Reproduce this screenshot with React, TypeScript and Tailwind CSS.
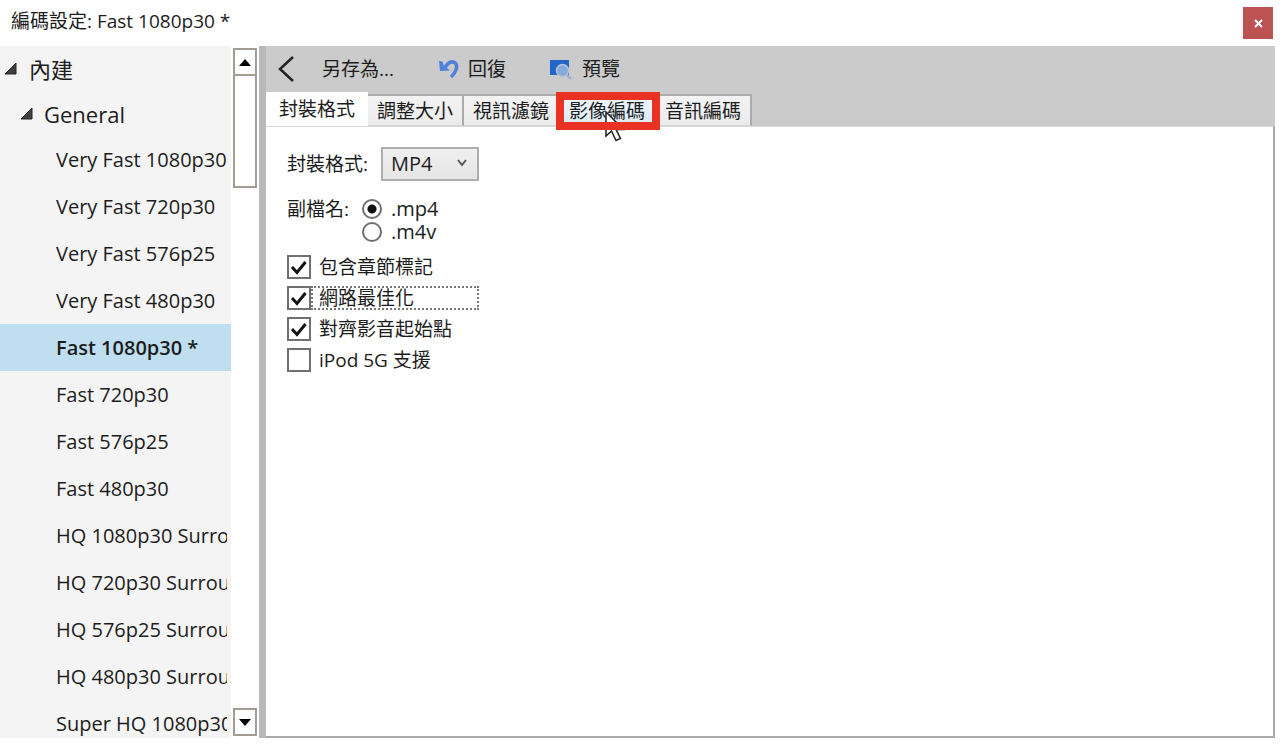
import React, { useState } from 'react';

const PRESETS = [
  'Very Fast 1080p30',
  'Very Fast 720p30',
  'Very Fast 576p25',
  'Very Fast 480p30',
  'Fast 1080p30',
  'Fast 720p30',
  'Fast 576p25',
  'Fast 480p30',
  'HQ 1080p30 Surround',
  'HQ 720p30 Surround',
  'HQ 576p25 Surround',
  'HQ 480p30 Surround',
  'Super HQ 1080p30 Surround',
];

const TABS = [
  { id: 'container', label: '封裝格式' },
  { id: 'dimensions', label: '調整大小' },
  { id: 'filters', label: '視訊濾鏡' },
  { id: 'video', label: '影像編碼' },
  { id: 'audio', label: '音訊編碼' },
];

const TAB_STYLES = {
  active: 'h-[34px] bg-white px-[13px]',
  hover: 'h-8 border-t-2 border-r-2 border-b border-[#ababab] bg-linear-to-b from-[#eef5fc] to-[#dcebf9] px-[9px]',
  idle: 'h-8 border-t-2 border-r-2 border-b border-[#ababab] border-b-[#d4d4d4] bg-linear-to-b from-[#f3f3f3] to-[#ebebeb] px-[9px]',
};

const OPTIONS = [
  { id: 'chapters', label: '包含章節標記' },
  { id: 'optimize', label: '網路最佳化' },
  { id: 'align', label: '對齊影音起始點' },
  { id: 'ipod', label: 'iPod 5G 支援' },
];

function Expander() {
  return (
    <svg width="13" height="13" viewBox="0 0 13 13" className="shrink-0">
      <path d="M12 1V12H1Z" fill="#404040" stroke="#262626" />
    </svg>
  );
}

function UndoIcon() {
  return (
    <svg width="22" height="22" viewBox="0 0 22 22" fill="none">
      <path d="M7 9.5C10 4.5 13.5 3 16.5 4.5C20.5 7 18.5 14 13 19" stroke="#4f80dc" strokeWidth="3.5" />
      <path d="M1 3L2 13L12 12.5L8.5 9.5L6 8.5L4.5 3.5Z" fill="#4f80dc" />
    </svg>
  );
}

function PreviewIcon() {
  return (
    <svg width="22" height="22" viewBox="0 0 22 22" fill="none">
      <rect x="0" y="2" width="19" height="15" fill="#2465c9" />
      <path d="M16 16L21 21" stroke="#9fb0c6" strokeWidth="2.5" />
      <circle cx="12.5" cy="12.5" r="6" fill="#86a9d8" stroke="#b3c3d8" strokeWidth="1.5" />
    </svg>
  );
}

function Sidebar() {
  const [selected, setSelected] = useState('Fast 1080p30');

  return (
    <aside className="flex w-[259px] shrink-0 overflow-hidden">
      <div className="min-w-0 flex-1 bg-[#f4f4f4]">
        <button className="flex h-[45px] w-full items-center gap-3 pl-1 text-[22px]">
          <Expander />
          內建
        </button>
        <button className="flex h-[45px] w-full items-center gap-[11px] pl-5 text-[22px]">
          <Expander />
          General
        </button>
        <ul className="text-[20px] leading-7">
          {PRESETS.map(preset => (
            <li key={preset} className={selected === preset ? 'bg-[#bfdff1]' : ''}>
              <button
                onClick={() => setSelected(preset)}
                className={`flex h-[47px] w-full items-center pr-1 pl-14 text-left ${selected === preset ? 'font-semibold' : ''}`}
              >
                <span className="overflow-hidden whitespace-nowrap">
                  {selected === preset ? `${preset} *` : preset}
                </span>
              </button>
            </li>
          ))}
        </ul>
      </div>

      {/* Scroll bar */}
      <div className="flex w-7 shrink-0 flex-col items-center bg-white py-0.5">
        <button aria-label="Scroll up" className="flex h-7 w-6 shrink-0 items-center justify-center border-2 border-[#a39c92]">
          <svg width="12" height="7" viewBox="0 0 12 7">
            <path d="M6 0L12 7H0Z" fill="#000" />
          </svg>
        </button>
        <div className="h-28 w-6 shrink-0 border-2 border-t-0 border-[#a39c92]" />
        <button aria-label="Scroll down" className="mt-auto flex h-7 w-6 shrink-0 items-center justify-center border-2 border-[#a39c92]">
          <svg width="12" height="7" viewBox="0 0 12 7">
            <path d="M0 0H12L6 7Z" fill="#000" />
          </svg>
        </button>
      </div>
    </aside>
  );
}

function ContainerPanel() {
  const [format, setFormat] = useState('MP4');
  const [extension, setExtension] = useState('.mp4');
  const [checked, setChecked] = useState(['chapters', 'optimize', 'align']);

  const toggle = (id: string) =>
    setChecked(checked.includes(id) ? checked.filter(c => c !== id) : [...checked, id]);

  return (
    <div className="flex flex-col items-start px-[21px] pt-5">
      <div className="flex items-center gap-[13px]">
        <label htmlFor="format">封裝格式:</label>
        <div className="relative">
          <select
            id="format"
            value={format}
            onChange={e => setFormat(e.target.value)}
            className="h-[34px] w-[98px] appearance-none border-2 border-[#adadad] bg-linear-to-b from-[#f0f0f0] to-[#e5e5e5] pl-2 text-[20px] outline-none"
          >
            <option>MP4</option>
            <option>MKV</option>
          </select>
          <svg width="10" height="8" viewBox="0 0 10 8" fill="none" className="pointer-events-none absolute top-3 right-3">
            <path d="M1 1L5 6L9 1" stroke="#555" strokeWidth="2" />
          </svg>
        </div>
      </div>

      <fieldset className="mt-4 flex gap-[13px]">
        <legend className="float-left">副檔名:</legend>
        <div>
          {['.mp4', '.m4v'].map(ext => (
            <label key={ext} className="flex h-[23px] items-center gap-[9px] text-[20px] leading-[22px]">
              <input
                type="radio"
                name="extension"
                checked={extension === ext}
                onChange={() => setExtension(ext)}
                className="size-5 appearance-none rounded-full border-2 border-[#707070] bg-white checked:bg-[radial-gradient(circle,#111_4px,transparent_5px)]"
              />
              {ext}
            </label>
          ))}
        </div>
      </fieldset>

      <div className="mt-2 flex flex-col">
        {OPTIONS.map(option => (
          <div key={option.id} className="flex h-[31px] items-center">
            <div className="relative flex">
              <input
                id={option.id}
                type="checkbox"
                checked={checked.includes(option.id)}
                onChange={() => toggle(option.id)}
                className="peer size-6 appearance-none border-2 border-[#707070] bg-white"
              />
              <svg
                width="24"
                height="24"
                viewBox="0 0 24 24"
                fill="none"
                className="pointer-events-none absolute inset-0 hidden peer-checked:block"
              >
                <path d="M5 12L10 17.5L18.5 7" stroke="#111" strokeWidth="3" />
              </svg>
            </div>
            <label
              htmlFor={option.id}
              className={`flex h-6 w-42 items-center border-2 border-dotted pl-1.5 ${option.id === 'optimize' ? 'border-[#777]' : 'border-transparent'}`}
            >
              {option.label}
            </label>
          </div>
        ))}
      </div>
    </div>
  );
}

export default function App() {
  const [activeTab, setActiveTab] = useState('container');

  const tabStyle = (id: string) => {
    if (id === activeTab) return TAB_STYLES.active;
    return id === 'video' ? TAB_STYLES.hover : TAB_STYLES.idle;
  };

  return (
    <div className="flex h-screen flex-col bg-white pb-[18px] font-['Open_Sans','Noto_Sans_CJK_TC',sans-serif] text-[19px] leading-6 text-[#1c1c1c]">
      <header className="flex h-[46px] shrink-0 items-center justify-between pr-[15px] pl-[11px]">
        <h1 className="pb-1">編碼設定: Fast 1080p30 *</h1>
        <button aria-label="Close" className="flex h-8 w-[30px] items-center justify-center bg-[#bd5252] text-white">
          <svg width="9" height="9" viewBox="0 0 9 9" fill="none">
            <path d="M1 1L8 8M8 1L1 8" stroke="#fff" strokeWidth="2" />
          </svg>
        </button>
      </header>

      <div className="flex min-h-0 flex-1 pr-[13px]">
        <Sidebar />
        <main className="flex min-w-0 flex-1 flex-col border-l-[7px] border-[#b9b9b9] bg-[#cbcbcb]">
          {/* Toolbar */}
          <div className="flex h-[46px] shrink-0 items-center pl-3">
            <button aria-label="Back" className="mr-7">
              <svg width="16" height="26" viewBox="0 0 16 26" fill="none">
                <path d="M15 1L2 13L15 25" stroke="#222" strokeWidth="2.5" />
              </svg>
            </button>
            <button className="mr-11">另存為...</button>
            <button className="mr-11 flex items-center gap-2">
              <UndoIcon />
              回復
            </button>
            <button className="flex items-center gap-2.5">
              <PreviewIcon />
              預覽
            </button>
          </div>

          {/* Tabs */}
          <nav role="tablist" className="flex h-[34px] shrink-0 items-end">
            {TABS.map(tab => (
              <div key={tab.id} className="relative">
                <button
                  role="tab"
                  aria-selected={activeTab === tab.id}
                  onClick={() => setActiveTab(tab.id)}
                  className={`block whitespace-nowrap ${tabStyle(tab.id)}`}
                >
                  {tab.label}
                </button>
                {tab.id === 'video' && (
                  <>
                    <svg width="24" height="34" viewBox="0 0 24 34" className="pointer-events-none absolute top-4 left-11 z-10">
                      <path
                        d="M2 2V26L7.5 21L12 30.5L16.5 28.5L12 19.5H19.5Z"
                        fill="#fff"
                        stroke="#222"
                        strokeWidth="1.5"
                      />
                    </svg>
                    <span className="pointer-events-none absolute -inset-x-1 -top-0.5 -bottom-1 z-20 border-8 border-[#e93223]" />
                  </>
                )}
              </div>
            ))}
          </nav>

          <section className="min-h-0 flex-1 border-t border-r-2 border-b-2 border-[#a9a9a9] border-t-[#d9d9d9] bg-white">
            {activeTab === 'container' && <ContainerPanel />}
          </section>
        </main>
      </div>
    </div>
  );
}
